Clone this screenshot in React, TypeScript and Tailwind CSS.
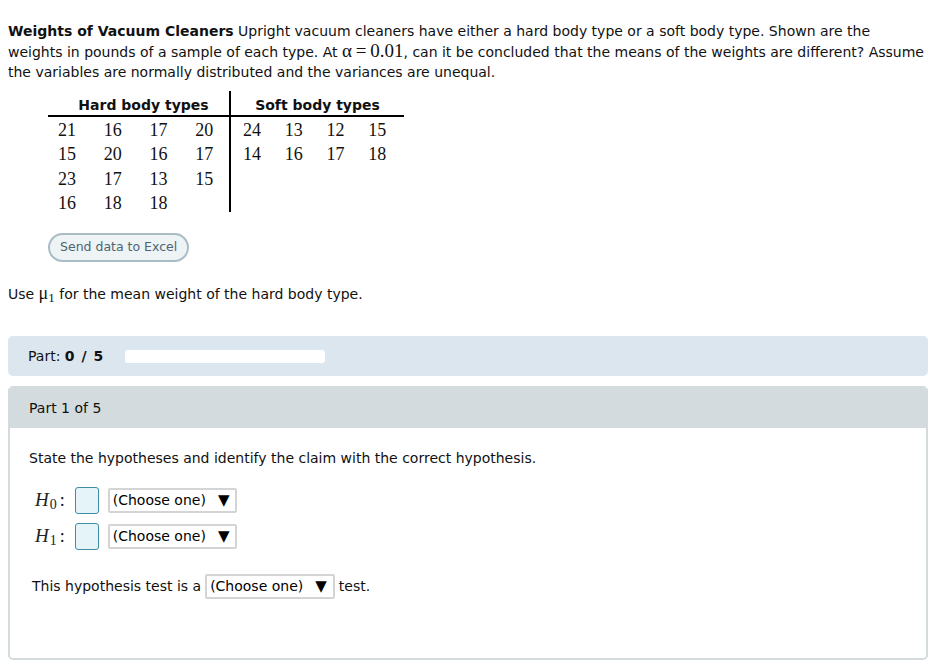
import React from 'react';

const sans = "font-['Verdana','DejaVu_Sans',sans-serif]";
const serif = "font-['Liberation_Serif','Times_New_Roman',serif]";

const hard = [
  ['21', '16', '17', '20'],
  ['15', '20', '16', '17'],
  ['23', '17', '13', '15'],
  ['16', '18', '18', ''],
];
const soft = [
  ['24', '13', '12', '15'],
  ['14', '16', '17', '18'],
  ['', '', '', ''],
  ['', '', '', ''],
];

const Select: React.FC = () => (
  <span className="inline-flex items-center h-[25px] pl-[3px] pr-[6px] gap-[12px] border-2 border-[#d4d4d4] rounded-[2px] bg-white text-[14px] text-black">
    <span>(Choose one)</span>
    <span className="text-[15px] leading-none">▼</span>
  </span>
);

const AnswerBox: React.FC = () => (
  <span className="inline-block w-[24px] h-[27px] border border-[#3d8ea3] rounded-[3px] bg-[#e4f4f8]" />
);

const Hyp: React.FC<{ sub: string }> = ({ sub }) => (
  <div className="flex items-center h-[36px]">
    <span className={`${serif} italic text-[19px] text-[#222]`}>
      H<sub className="not-italic text-[14px] ml-[1px]">{sub}</sub>
    </span>
    <span className={`${serif} text-[18px] ml-[3px] mr-[10px]`}>:</span>
    <AnswerBox />
    <span className="ml-[9px]"><Select /></span>
  </div>
);

const DataCol: React.FC<{ title: string; rows: string[][]; w: string; grid: string; pad?: string }> = ({ title, rows, w, grid, pad }) => (
  <div className={w}>
    <div className={`h-[26px] pt-[4px] border-b-2 border-black text-center font-bold text-[14px] leading-[20px] ${pad ?? ''}`}>{title}</div>
    <div className={`${serif} text-[18px] leading-[24.3px] mt-[1px] ${grid}`}>
      {rows.map((row, i) => (
        <div key={i} className="grid grid-cols-4 text-center">
          {row.map((n, j) => <span key={j}>{n || '\u00a0'}</span>)}
        </div>
      ))}
    </div>
  </div>
);

const App: React.FC = () => {
  return (
    <div className={`${sans} w-[936px] h-[666px] bg-white text-[14px] text-[#111] overflow-hidden`}>
      {/* Problem statement */}
      <p className="pl-[8px] pt-[21px] leading-[20px] whitespace-nowrap">
        <b>Weights of Vacuum Cleaners</b> Upright vacuum cleaners have either a hard body type or a soft body type. Shown are the
        <br />
        weights in pounds of a sample of each type. At{' '}
        <span className={`${serif} text-[19px]`}>α{'\u2009'}={'\u2009'}0.01</span>, can it be concluded that the means of the weights are different? Assume
        <br />
        the variables are normally distributed and the variances are unequal.
      </p>

      {/* Data table */}
      <div className="flex ml-[48px] mt-[9px]">
        <DataCol title="Hard body types" rows={hard} w="w-[181px]" grid="-ml-[4px] w-[183px]" pad="pl-[10px]" />
        <div className="w-[2px] bg-black h-[121px]" />
        <DataCol title="Soft body types" rows={soft} w="w-[173px]" grid="pr-[6px]" />
      </div>

      <button className="block ml-[48px] mt-[18px] h-[29px] px-[10px] rounded-full border-2 border-[#a9bcc4] bg-[#eef3f5] text-[12.5px] text-[#4b6572]">
        Send data to Excel
      </button>

      <p className="px-[8px] mt-[21px] leading-[20px]">
        Use <span className={`${serif} text-[18px]`}>μ<sub className="text-[13px]">1</sub></span> for the mean weight of the hard body type.
      </p>

      {/* Progress */}
      <div className="mx-[8px] mt-[32px] h-[40px] rounded-[5px] bg-[#dbe6ef] flex items-center pl-[20px]">
        <span>Part: <b className="tracking-[1px]">0 / 5</b></span>
        <span className="ml-[21px] w-[200px] h-[13px] rounded-[3px] bg-white" />
      </div>

      {/* Part card */}
      <div className="mx-[8px] mt-[10px] h-[274px] rounded-[5px] border-2 border-[#d3dbde] overflow-hidden">
        <div className="h-[40px] bg-[#d3dbde] flex items-center pl-[19px]">Part 1 of 5</div>
        <div className="pl-[19px] pt-[20px]">
          <p className="leading-[20px]">State the hypotheses and identify the claim with the correct hypothesis.</p>
          <div className="mt-[14px] ml-[6px]">
            <Hyp sub="0" />
            <Hyp sub="1" />
          </div>
          <div className="flex items-center mt-[20px] ml-[3px] gap-[4px]">
            <span>This hypothesis test is a</span>
            <Select />
            <span>test.</span>
          </div>
        </div>
      </div>
    </div>
  );
};

export default App;
